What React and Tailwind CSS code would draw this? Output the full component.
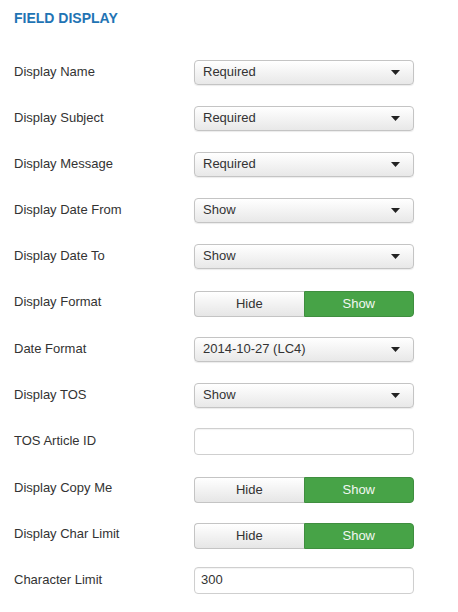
import React from "react";

const Select = ({ value }) => (
  <div className="w-[220px] h-[25px] flex items-center justify-between pl-[8px] pr-[13px] rounded-[4px] border border-[#c4c4c4] bg-gradient-to-b from-[#ffffff] to-[#e8e8e8] shadow-[0_1px_1px_rgba(0,0,0,0.08)] text-[13px] text-[#333]">
    <span>{value}</span>
    <svg width="9" height="5" viewBox="0 0 9 5"><path d="M0 0 L9 0 L4.5 5 Z" fill="#222" /></svg>
  </div>
);

const Toggle = () => (
  <div className="w-[220px] h-[26px] flex text-[13px] translate-y-[2px]">
    <div className="flex-1 flex items-center justify-center rounded-l-[4px] border border-[#c4c4c4] border-r-0 bg-gradient-to-b from-[#ffffff] to-[#e6e6e6] text-[#333]">Hide</div>
    <div className="flex-1 flex items-center justify-center rounded-r-[4px] border border-[#3f8e3f] bg-[#47a347] text-[#f2f7f2]">Show</div>
  </div>
);

const Input = ({ value }) => (
  <div className="w-[220px] h-[27px] flex items-center px-[6px] rounded-[4px] border border-[#cfcfcf] bg-white text-[13px] text-[#333] shadow-[inset_0_1px_1px_rgba(0,0,0,0.05)]">
    {value}
  </div>
);

const rows = [
  ["Display Name", <Select value="Required" />, "h-[46px]"],
  ["Display Subject", <Select value="Required" />, "h-[46px]"],
  ["Display Message", <Select value="Required" />, "h-[46px]"],
  ["Display Date From", <Select value="Show" />, "h-[46px]"],
  ["Display Date To", <Select value="Show" />, "h-[46px]"],
  ["Display Format", <Toggle />, "h-[47px]"],
  ["Date Format", <Select value="2014-10-27 (LC4)" />, "h-[46px]"],
  ["Display TOS", <Select value="Show" />, "h-[46px]"],
  ["TOS Article ID", <Input value="" />, "h-[47px]"],
  ["Display Copy Me", <Toggle />, "h-[46px]"],
  ["Display Char Limit", <Toggle />, "h-[46px]"],
  ["Character Limit", <Input value="300" />, "h-[46px]"],
];

export default function App() {
  return (
    <div className="w-[458px] h-[612px] bg-white pl-[14px] pt-[8px] font-['Liberation_Sans',Arial,sans-serif]">
      <h2 className="h-[20px] leading-[20px] text-[14px] font-bold text-[#1f74b4] uppercase">Field Display</h2>
      <div className="mt-[21px] flex flex-col">
        {rows.map(([label, ctrl, h]) => (
          <div key={label} className={`flex items-start ${h}`}>
            <div className="w-[180px] h-[46px] flex items-center text-[13px] text-[#333]">{label}</div>
            <div className="h-[46px] flex items-center">{ctrl}</div>
          </div>
        ))}
      </div>
    </div>
  );
}
